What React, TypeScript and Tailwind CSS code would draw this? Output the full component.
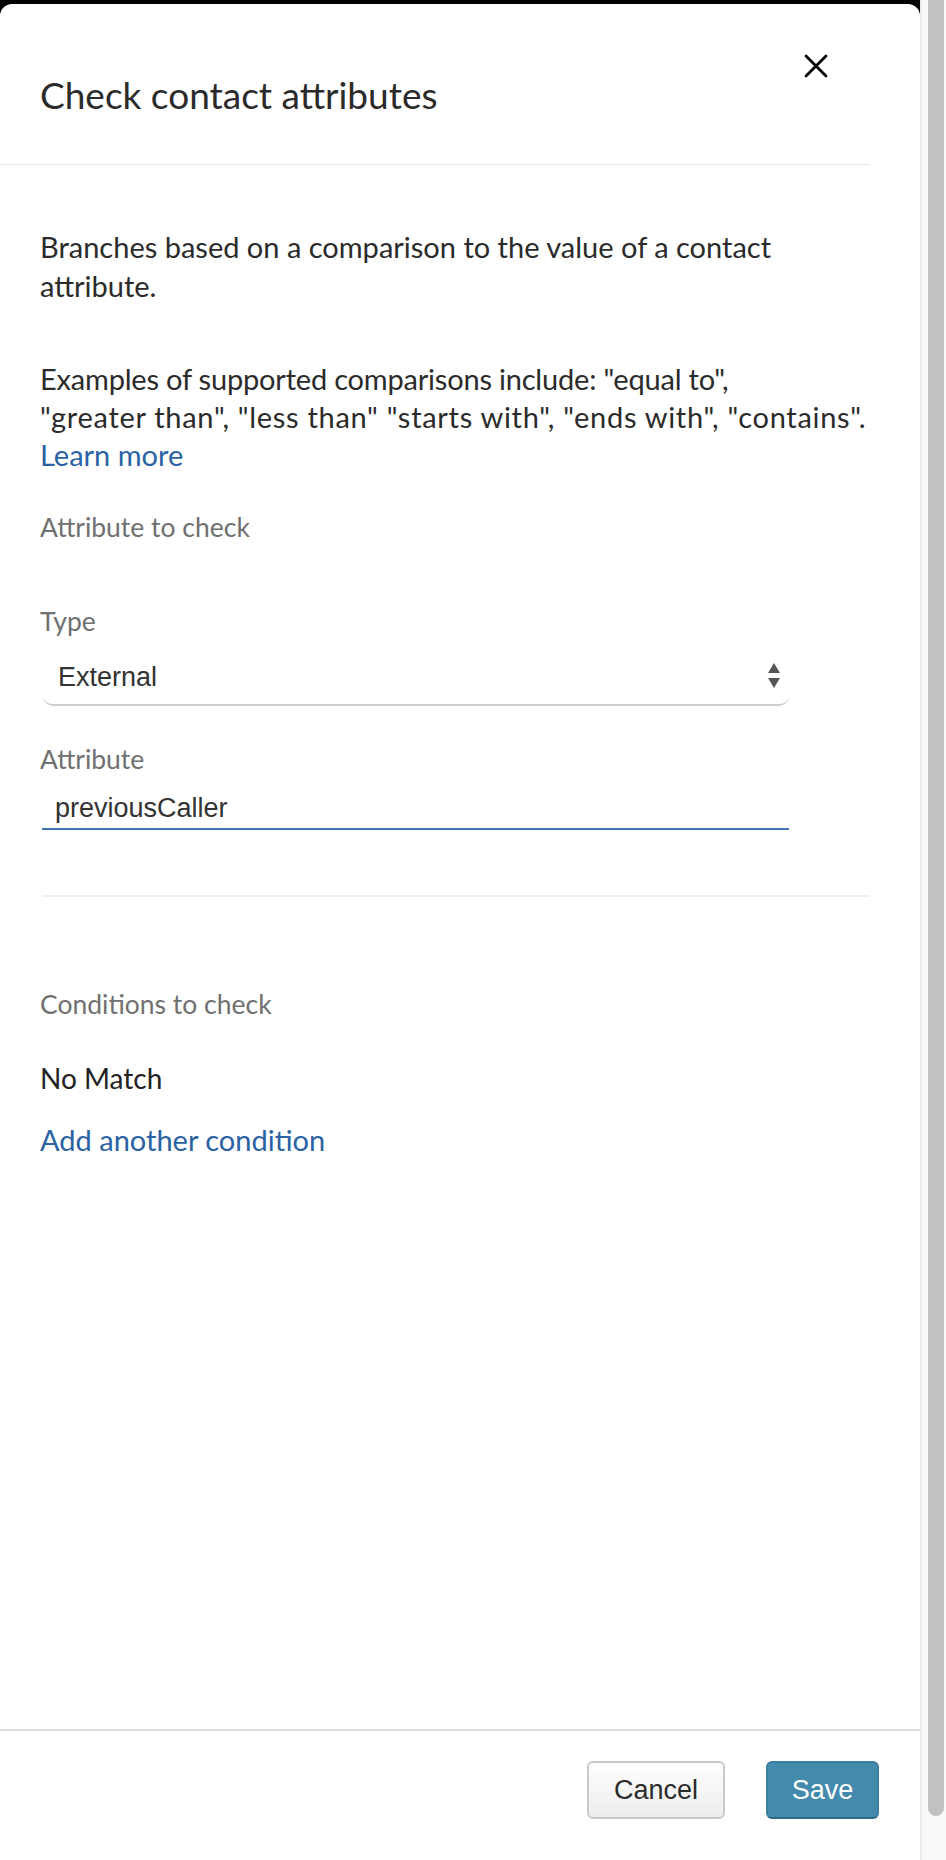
const ui = { fontFamily: "Lato, 'Open Sans', sans-serif" };
const helv = { fontFamily: "'Liberation Sans', Arial, sans-serif" };

function Label({ children, className }: { children: React.ReactNode; className?: string }) {
  return (
    <div className={`text-[26.5px] leading-[30px] text-[#707070] ${className ?? ""}`} style={ui}>
      {children}
    </div>
  );
}

export default function App() {
  return (
    <div className="flex w-[946px] h-[1860px] bg-black overflow-hidden">
      {/* panel */}
      <div className="w-[920px] pt-[4px] flex flex-col">
        <div className="flex-1 flex flex-col bg-white rounded-t-[12px]" style={ui}>
          {/* header */}
          <div className="w-[870px] h-[161px] border-b border-[#e6e6e6] flex items-start justify-between pl-[40px] pr-[40px]">
            <h1 className="mt-[72px] text-[37px] leading-[38px] text-[#2b2b2b] whitespace-nowrap">Check contact attributes</h1>
            <button className="mt-[49px] mr-[1px] w-[26px] h-[26px] flex items-center justify-center">
              <svg width="24" height="24" viewBox="0 0 24 24">
                <path d="M2 2 L22 22 M22 2 L2 22" stroke="#000" strokeWidth="2.8" strokeLinecap="round" />
              </svg>
            </button>
          </div>

          {/* body */}
          <div className="px-[40px] flex flex-col text-[#2b2b2b]">
            <p className="mt-[62px] text-[29px] leading-[39px] whitespace-nowrap">
              Branches based on a comparison to the value of a contact
              <br />
              attribute.
            </p>
            <div className="mt-[55px] text-[29px] leading-[38px] whitespace-nowrap">
              <p className="tracking-[-0.2px]">Examples of supported comparisons include: "equal to",</p>
              <p className="tracking-[0.7px]">"greater than", "less than" "starts with", "ends with", "contains".</p>
              <a className="block w-fit text-[#2a62a3]">Learn more</a>
            </div>

            <Label className="mt-[38px]">Attribute to check</Label>

            <Label className="mt-[64px]">Type</Label>
            <div className="mt-[14px] ml-[3px] w-[746px] h-[56px] flex items-center justify-between pl-[15px] pr-[8px] bg-white border-b-2 border-[#cccccc] rounded-b-[10px]">
              <span className="text-[27px] text-[#333]" style={helv}>External</span>
              <svg width="14" height="28" viewBox="0 0 14 28" className="mt-[-2px]">
                <path d="M7 1 L13 11 L1 11 Z" fill="#555" />
                <path d="M1 16 L13 16 L7 26 Z" fill="#555" />
              </svg>
            </div>

            <Label className="mt-[38px]">Attribute</Label>
            <div className="mt-[14px] ml-[2px] w-[747px] h-[42px] flex items-center pl-[13px] border-b-2 border-[#3f74b3]">
              <span className="text-[27px] text-[#333]" style={helv}>previousCaller</span>
            </div>

            <div className="mt-[65px] ml-[2px] w-[828px] h-[2px] bg-[#eeeeee]" />

            <Label className="mt-[92px]">Conditions to check</Label>
            <div className="mt-[43px] text-[28px] leading-[32px] text-[#222]">No Match</div>
            <a className="mt-[30px] w-fit text-[29px] leading-[32px] text-[#2a62a3]">Add another condition</a>
          </div>

          <div className="flex-1" />

          {/* footer */}
          <div className="border-t-2 border-[#dddddd] pt-[30px] pb-[41px] pr-[41px] flex justify-end gap-[41px]" style={helv}>
            <button className="w-[138px] h-[58px] rounded-[6px] border-2 border-[#c9c9c9] bg-gradient-to-b from-white to-[#ececec] text-[27px] text-[#2b2b2b]">
              Cancel
            </button>
            <button className="w-[113px] h-[58px] rounded-[6px] border-2 border-[#3d7f9f] border-b-[#2f6a86] bg-[#438aad] text-[27px] text-white">
              Save
            </button>
          </div>
        </div>
      </div>

      {/* scrollbar */}
      <div className="w-[26px] h-full flex bg-[#f9f9f9] border-l-2 border-[#ececec]">
        <div className="ml-[6px] w-[16px] h-[1816px] bg-[#c1c1c1] rounded-b-[8px]" />
      </div>
    </div>
  );
}
